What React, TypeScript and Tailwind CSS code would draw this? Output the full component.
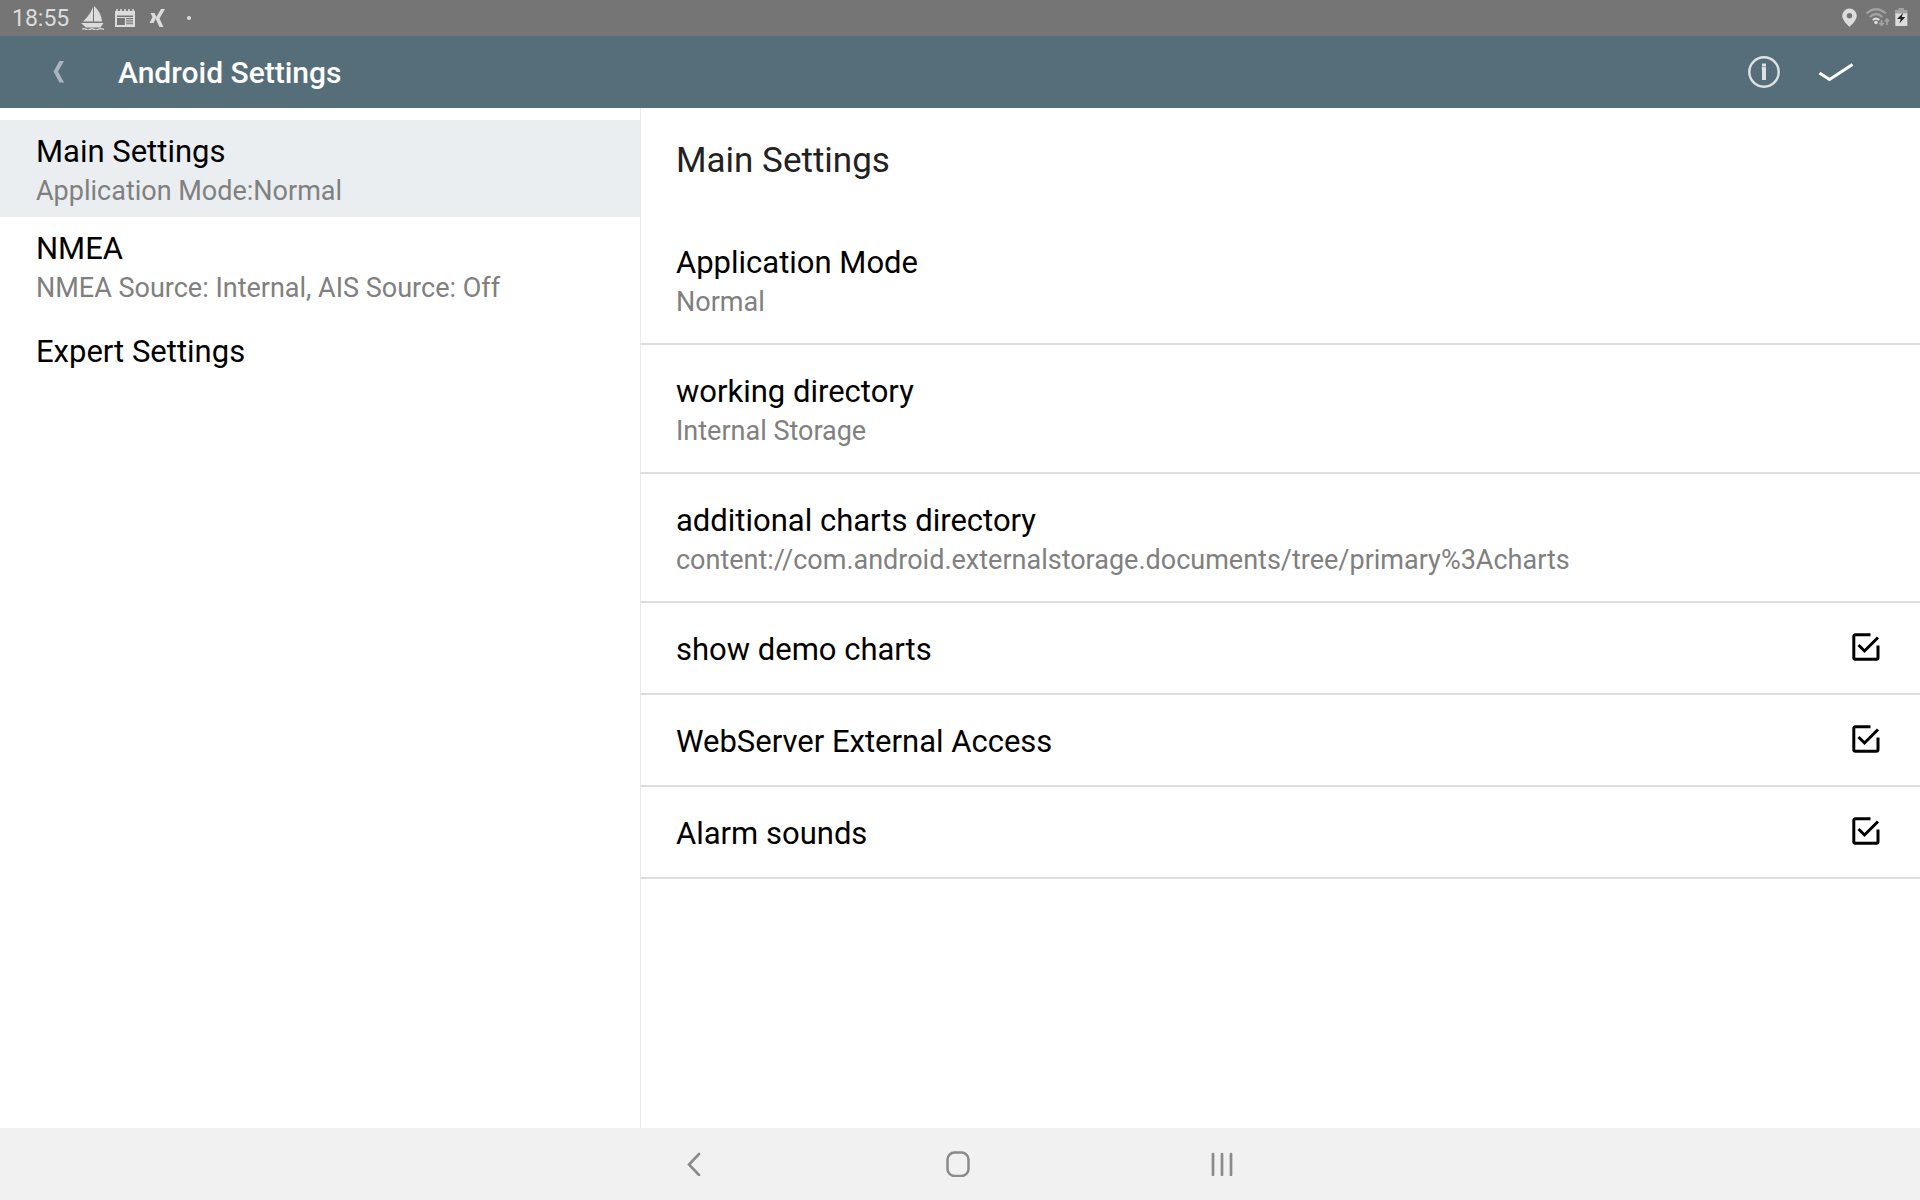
import { useState } from "react";

type Item = { title: string; detail?: string };

const sections: Item[] = [
  { title: "Main Settings", detail: "Application Mode:Normal" },
  { title: "NMEA", detail: "NMEA Source: Internal, AIS Source: Off" },
  { title: "Expert Settings" },
];

const values: Item[] = [
  { title: "Application Mode", detail: "Normal" },
  { title: "working directory", detail: "Internal Storage" },
  {
    title: "additional charts directory",
    detail: "content://com.android.externalstorage.documents/tree/primary%3Acharts",
  },
];

const toggles = ["show demo charts", "WebServer External Access", "Alarm sounds"];

function StatusBar() {
  return (
    <div className="flex h-9 shrink-0 items-center justify-between bg-[#757575] pr-3 pl-3 text-[#dcdcdc]">
      <div className="flex items-center">
        <span className="w-[69px] pt-0.5 text-[23px] leading-8">18:55</span>
        <svg className="h-6 w-6" viewBox="0 0 24 24" fill="currentColor" aria-hidden="true">
          <path d="M13 0C17.500 4 20.500 9 21 15.500H13Z" />
          <path d="M12 1V15.500H2C5.500 12 9.500 8 12 1Z" />
          <path d="M0 17H22.500L19.500 21.500H5Z" />
          <path d="M1 23.300Q3 22 5 23.300T9 23.300T13 23.300T17 23.300T23 23.300" fill="none" stroke="currentColor" strokeWidth="1.300" />
        </svg>
        <svg className="ml-[10px] h-5 w-5" viewBox="0 0 20 20" fill="none" aria-hidden="true">
          <path d="M1 3V18H19V3" stroke="currentColor" strokeWidth="2" />
          <path d="M0 3H20V7.500H0Z" fill="currentColor" />
          <path d="M2 1V4M6 1V4M10 1V4M14 1V4M18 1V4" stroke="currentColor" strokeWidth="1.600" />
          <path d="M2 9.500H18M10.500 9V18" stroke="currentColor" strokeWidth="1.200" />
          <path d="M11 11.800H18M11 14H18M11 16.200H18" stroke="currentColor" strokeWidth="1.100" />
        </svg>
        <svg className="ml-[14px] h-5 w-5" viewBox="0 0 20 20" fill="currentColor" aria-hidden="true">
          <path d="M1.500 5H5.500L7.500 9L4.500 15H.5L3.500 9Z" />
          <path d="M12 1H16L10.500 10.500L14.500 19H10.500L6.500 10.500Z" />
        </svg>
        <span className="ml-[18px] size-1 rounded-full bg-current" />
      </div>
      <div className="flex items-center">
        <svg className="h-5 w-4" viewBox="0 0 16 20" fill="currentColor" fillRule="evenodd" aria-label="Location">
          <path d="M7.500 .5a7.300 7.300 0 0 0-7.300 7.300c0 5 7.300 11 7.300 11s7.300-6 7.300-11a7.300 7.300 0 0 0-7.300-7.300Zm0 4.600a2.700 2.700 0 1 1 0 5.400a2.700 2.700 0 0 1 0-5.400Z" />
        </svg>
        <svg className="ml-2 h-5 w-6" viewBox="0 0 24 20" fill="none" strokeWidth="2.200" aria-label="Wi-Fi">
          <path d="M.5 5.500Q10-3 20 5.500M3.800 9Q10.200 3 16.500 9" stroke="#a2a2a2" />
          <path d="M6.800 12Q10 9.200 13.300 12" stroke="#dcdcdc" />
          <circle cx="10" cy="14.500" r="1.800" fill="#dcdcdc" />
          <path d="M15.500 12V17M13.300 14.800L15.500 17.300L17.700 14.800M21 17V11.500M18.800 13.500L21 11L23.200 13.500" stroke="#a2a2a2" strokeWidth="1.700" />
        </svg>
        <svg className="ml-[5px] h-5 w-[13px]" viewBox="0 0 13 20" aria-label="Battery charging">
          <path d="M3.500 0H9V2H12.300V7H.3V2H3.500Z" fill="#a2a2a2" />
          <path d="M.3 5H12.300V18H.3Z" fill="#dcdcdc" />
          <path d="M.3 2H12.300V5.500H.3Z" fill="#a2a2a2" />
          <path d="M8 5L2 11H5.800L4.300 15.500L10.300 9H6.800Z" fill="#222" />
        </svg>
      </div>
    </div>
  );
}

function AppBar() {
  return (
    <header className="flex h-[72px] shrink-0 items-center bg-[#566e7a] pr-[60px] pl-10 text-white">
      <button type="button" aria-label="Back" className="flex h-12 w-[78px] items-center pl-[13px]">
        <svg className="h-[22px] w-3" viewBox="0 0 12 22" fill="#aab6bc" aria-hidden="true">
          <path d="M6.500 0H11L5 10.500L11 21.500H6.500L.5 10.500Z" />
        </svg>
      </button>
      <h1 className="flex-1 pt-0.5 text-[30px] leading-9 font-medium">Android Settings</h1>
      <button type="button" aria-label="Information" className="mr-3 flex h-12 w-[72px] items-center justify-center">
        <svg className="size-8" viewBox="0 0 32 32" fill="none" stroke="#dde2e4" aria-hidden="true">
          <circle cx="16" cy="16" r="14.700" strokeWidth="2.400" />
          <path d="M13.800 12.300H16.500" strokeWidth="2.400" />
          <path d="M14 9H18" strokeWidth="3" />
          <path d="M16 11.200V24" strokeWidth="4" />
        </svg>
      </button>
      <button type="button" aria-label="Accept" className="flex h-12 w-[48px] items-center justify-center">
        <svg className="h-5 w-9" viewBox="0 0 36 20" fill="none" stroke="#fff" strokeWidth="3" aria-hidden="true">
          <path d="M1.500 11L11.500 17.500L34.500 2.500" />
        </svg>
      </button>
    </header>
  );
}

function ItemText({ title, detail }: Item) {
  return (
    <>
      <span className="block text-[31px] leading-[39px] text-black">{title}</span>
      {detail && <span className="block text-[27px] leading-[41px] text-[#808080]">{detail}</span>}
    </>
  );
}

function Toggle({ title }: { title: string }) {
  const [on, setOn] = useState(true);
  return (
    <label className="flex items-start justify-between border-b-2 border-[#dedede] pt-[27px] pr-10 pb-6 pl-9">
      <span className="text-[31px] leading-[39px] text-black">{title}</span>
      <input type="checkbox" className="sr-only" checked={on} onChange={() => setOn(!on)} />
      <svg className="mt-[3px] size-7" viewBox="0 0 28 28" fill="none" stroke="#000" strokeWidth="3" aria-hidden="true">
        <path d="M18.500 1.800H3.500Q1.800 1.800 1.800 3.500V24.500Q1.800 26.200 3.500 26.200H24.200Q26 26.200 26 24.500V12.500" />
        {on && <path d="M6.500 12L12.500 18L26 4.500" />}
      </svg>
    </label>
  );
}

function NavBar() {
  return (
    <nav className="flex h-[72px] shrink-0 items-center justify-center bg-[#f1f1f1] pr-1" aria-label="System">
      <button type="button" aria-label="Back" className="flex h-full w-[264px] items-center justify-center">
        <svg className="h-6 w-[14px]" viewBox="0 0 14 24" fill="none" stroke="#8a8a8a" strokeWidth="2.600" strokeLinecap="round" aria-hidden="true">
          <path d="M12 2L2 12.500L12 23" />
        </svg>
      </button>
      <button type="button" aria-label="Home" className="flex h-full w-[264px] items-center justify-center">
        <svg className="h-[26px] w-[26px]" viewBox="0 0 26 26" fill="none" stroke="#8a8a8a" strokeWidth="2.500" aria-hidden="true">
          <rect x="2.500" y="1.500" width="21" height="23.500" rx="7" />
        </svg>
      </button>
      <button type="button" aria-label="Recents" className="flex h-full w-[264px] items-center justify-center">
        <svg className="h-6 w-6" viewBox="0 0 24 24" fill="none" stroke="#8a8a8a" strokeWidth="2.700" strokeLinecap="round" aria-hidden="true">
          <path d="M3 2V23M12 2V23M21 2V23" />
        </svg>
      </button>
    </nav>
  );
}

export default function App() {
  const [selected, setSelected] = useState(0);
  return (
    <div className="flex min-h-screen flex-col bg-white font-['Roboto',sans-serif]">
      <StatusBar />
      <AppBar />
      <div className="flex flex-1">
        <aside className="w-1/3 pt-3">
          {sections.map((s, i) => (
            <button
              key={s.title}
              type="button"
              onClick={() => setSelected(i)}
              className={`block w-full pl-9 text-left ${s.detail ? "pt-3 pb-[5px]" : "py-[18px]"} ${i === selected ? "bg-[#eaeef1]" : ""}`}
            >
              <ItemText {...s} />
            </button>
          ))}
        </aside>
        <main className="min-w-0 flex-1 shadow-[inset_1px_0_0_#ebebeb]">
          <h2 className="pt-[31px] pb-[33px] pl-9 text-[35px] leading-[44px] text-[#222]">{sections[selected].title}</h2>
          {values.map((v) => (
            <button key={v.title} type="button" className="block w-full border-b-2 border-[#dedede] pt-[27px] pb-5 pl-9 text-left">
              <ItemText {...v} />
            </button>
          ))}
          {toggles.map((t) => (
            <Toggle key={t} title={t} />
          ))}
        </main>
      </div>
      <NavBar />
    </div>
  );
}
